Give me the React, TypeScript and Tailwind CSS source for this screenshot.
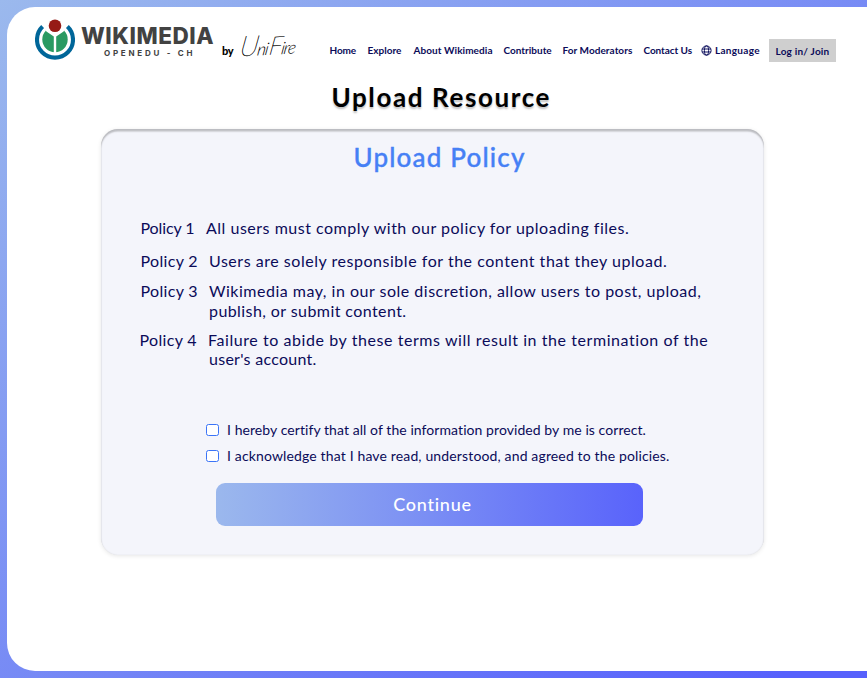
import type { ReactNode } from 'react';

function WikimediaMark() {
  return (
    <svg viewBox="0 0 40 42" className="mt-[11px] h-[42px] w-10 shrink-0">
      <path d="M7.6 8.6A18 18 0 1 0 32.4 8.6" fill="none" stroke="#006699" strokeWidth="4.1" />
      <circle cx="20" cy="21.6" r="12.7" fill="#2a9a62" />
      <path d="M8 7 L11.4 13.4 L18.8 18.6 V36 H21.2 V18.6 L28.6 13.4 L32 7 Z" fill="#fff" />
      <circle cx="20" cy="7.8" r="6.3" fill="#961a16" />
    </svg>
  );
}

function Globe() {
  return (
    <svg viewBox="0 0 11 11" className="mt-[5px] h-[11px] w-[11px]" fill="none" stroke="#0d0f5c" strokeWidth="1">
      <circle cx="5.5" cy="5.5" r="4.6" />
      <ellipse cx="5.5" cy="5.5" rx="2.1" ry="4.6" />
      <path d="M1.2 4h8.6M1.2 7h8.6" />
    </svg>
  );
}

function Check({ children }: { children: ReactNode }) {
  return (
    <label className="flex h-5 items-start">
      <span className="mt-1 mr-2 h-3 w-[13px] shrink-0 rounded-[2.5px] border border-[#3b74f7] bg-white" />
      {children}
    </label>
  );
}

export default function App() {
  return (
    <div className="h-[678px] w-full overflow-hidden bg-white font-['Lato',sans-serif] whitespace-nowrap text-[#0b0b59]">
      <div className="h-[677.5px] bg-linear-to-br/srgb from-[#9bb9ed] to-[#5761fc] to-95% pt-[6.5px] pl-[7px]">
        <main className="h-[664px] rounded-l-[28px] bg-white">
          <header className="flex h-[63.5px] items-start pl-7 text-[10px] leading-5 font-bold">
            <WikimediaMark />
            <div className="ml-[6px] w-[141px] font-['Inter',sans-serif] text-[#424242]">
              <div className="mt-[17px] text-[22.5px] leading-6 font-extrabold tracking-[0.55px]">WIKIMEDIA</div>
              <div className="-mt-px pl-[23px] text-[8px] leading-3 tracking-[2.75px]">OPENEDU - CH</div>
            </div>
            <div className="mt-[34px] w-[19px] text-[11px] font-black tracking-[-0.4px] text-black">by</div>
            <div className="mt-[19px] -ml-[5px] w-[93.5px] -rotate-3 text-[17px] leading-[34px] font-light tracking-[-1px] text-black italic">
              <span className="inline-block origin-bottom-left -skew-x-12">
                <span className="text-[28px] font-thin [-webkit-text-stroke:0.3px_black]">U</span>ni{' '}
                <span className="-ml-[2px] text-[25px] font-thin [-webkit-text-stroke:0.3px_black]">F</span>ire
              </span>
            </div>
            <nav className="mt-[33.5px] flex">
              <a className="w-[38px] tracking-[-0.15px]">Home</a>
              <a className="w-[46px]">Explore</a>
              <a className="w-[90px] tracking-[0.07px]">About Wikimedia</a>
              <a className="w-[59px]">Contribute</a>
              <a className="w-[81px] tracking-[0.05px]">For Moderators</a>
              <a className="w-[57px] tracking-[-0.07px]">Contact Us</a>
              <Globe />
              <a className="ml-[3.5px] w-[54px] tracking-[0.29px]">Language</a>
            </nav>
            <button className="mt-8 h-[23px] w-[67px] bg-[#cfcfcf] pt-[2px] text-center tracking-[0.21px]">Log in/ Join</button>
          </header>

          <h1 className="mt-[7px] ml-[324.5px] text-[26px] leading-10 font-bold tracking-[1.6px] text-black [text-shadow:0_2px_2px_rgba(0,0,0,0.25)]">
            Upload Resource
          </h1>

          <section className="mt-3 ml-[94px] h-[426px] w-[662.5px] rounded-[17px] bg-[#f4f5fb] pt-3 shadow-[inset_0_2.5px_1.5px_rgba(0,0,0,0.22),inset_0_0_1.5px_rgba(0,0,0,0.12),0_1px_4px_rgba(0,0,0,0.1)]">
            <h2 className="pl-[252.5px] text-[26px] leading-8 font-medium tracking-[1.17px] text-[#4680f5] [-webkit-text-stroke:0.35px_#4680f5]">
              Upload Policy
            </h2>
            <div className="mt-[45px] pl-[39.5px] text-base leading-5">
              <div className="flex">
                <span className="w-[65.5px] tracking-[-0.1px]">Policy 1</span>
                <p className="tracking-[0.51px]">All users must comply with our policy for uploading files.</p>
              </div>
              <div className="mt-[13px] flex">
                <span className="w-[68.5px] tracking-[0.34px]">Policy 2</span>
                <p className="tracking-[0.53px]">Users are solely responsible for the content that they upload.</p>
              </div>
              <div className="mt-[10px] flex">
                <span className="w-[68.5px] tracking-[0.34px]">Policy 3</span>
                <p className="tracking-[0.5px]">
                  Wikimedia may, in our sole discretion, allow users to post, upload,
                  <br />
                  <span className="tracking-[0.42px]">publish, or submit content.</span>
                </p>
              </div>
              <div className="mt-[9px] -ml-px flex leading-[19px]">
                <span className="w-[68.5px] tracking-[0.34px]">Policy 4</span>
                <p className="tracking-[0.57px]">
                  Failure to abide by these terms will result in the termination of the
                  <br />
                  <span className="pl-px tracking-[0.27px]">user's account.</span>
                </p>
              </div>
            </div>
            <div className="mt-[52px] flex flex-col gap-[6px] pl-[105px] text-sm leading-5">
              <Check><span className="tracking-[0.07px]">I hereby certify that all of the information provided by me is correct.</span></Check>
              <Check><span className="tracking-[0.145px]">I acknowledge that I have read, understood, and agreed to the policies.</span></Check>
            </div>
            <button className="mt-[17px] ml-[115px] block h-[43px] w-[427px] rounded-[9px] bg-linear-to-r/srgb from-[#9bb8ed] to-[#5963fb] pb-0.5 pl-[6px] text-[18px] leading-6 font-medium tracking-[0.73px] text-white">
              Continue
            </button>
          </section>
        </main>
      </div>
    </div>
  );
}
